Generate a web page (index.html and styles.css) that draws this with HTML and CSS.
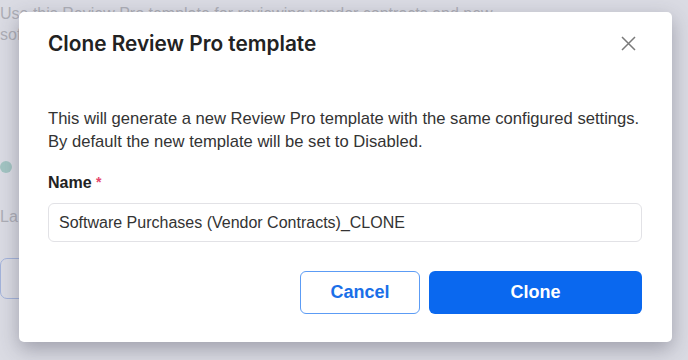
FILE: index.html
```html
<!DOCTYPE html>
<html lang="en">
<head>
    <meta charset="UTF-8">
    <meta name="viewport" content="width=device-width, initial-scale=1.0">
    <title>Clone Review Pro template</title>
    <link rel="stylesheet" href="styles.css">
</head>
<body>
    <!-- Page behind the overlay -->
    <div class="page">
        <p class="page-intro">Use this Review Pro template for reviewing vendor contracts and new<br>sof</p>
        <span class="dot"></span>
        <p class="page-label">La</p>
        <div class="page-button"></div>
    </div>

    <!-- Overlay + dialog -->
    <div class="overlay">
        <div class="modal">
            <div class="modal-header">
                <h2>Clone Review Pro template</h2>
                <button class="close" aria-label="Close">
                    <svg width="15" height="15" viewBox="0 0 15 15">
                        <path d="M1 1 L14 14 M14 1 L1 14" stroke="#7a7a7a" stroke-width="1.5" fill="none"/>
                    </svg>
                </button>
            </div>
            <p class="modal-text">This will generate a new Review Pro template with the same configured settings. By default the new template will be set to Disabled.</p>
            <label class="field-label" for="name">Name <span class="req">*</span></label>
            <input class="field-input" id="name" type="text" value="Software Purchases (Vendor Contracts)_CLONE">
            <div class="modal-actions">
                <button class="btn btn-outline">Cancel</button>
                <button class="btn btn-primary">Clone</button>
            </div>
        </div>
    </div>
</body>
</html>
```

FILE: styles.css
```css
/* General Styles */
body {
    margin: 0;
    padding: 0;
    width: 688px;
    height: 360px;
    overflow: hidden;
    position: relative;
    font-family: "Liberation Sans", Arial, sans-serif;
    background-color: #fff;
    color: #333;
}

/* Page behind the overlay */
.page {
    padding-top: 3px;
    color: #888;
}
.page-intro {
    margin: 0;
    font-size: 16px;
    line-height: 21px;
}
.dot {
    display: block;
    margin-top: 116px;
    width: 12px;
    height: 12px;
    border-radius: 50%;
    background-color: #6cc3a8;
}
.page-label {
    margin: 33px 0 0 0;
    font-size: 16px;
    line-height: 21px;
}
.page-button {
    margin-top: 31px;
    width: 120px;
    height: 41px;
    box-sizing: border-box;
    border: 1.5px solid #6f96e8;
    border-radius: 7px;
}

/* Overlay */
.overlay {
    position: absolute;
    inset: 0;
    background-color: rgba(196, 197, 210, 0.62);
    padding: 12px 0 0 19px;
}
.modal {
    width: 653px;
    height: 330px;
    box-sizing: border-box;
    background-color: #fff;
    border-radius: 5px;
    box-shadow: 0 7px 20px rgba(60, 60, 80, 0.38);
    padding: 0 30px 0 29px;
}
.modal-header {
    display: flex;
    justify-content: space-between;
    align-items: center;
    height: 62px;
}
.modal-header h2 {
    margin: 0;
    font-family: Inter, "Liberation Sans", sans-serif;
    font-size: 20.8px;
    font-weight: 600;
    color: #222;
}
.close {
    border: none;
    background: none;
    padding: 0;
    margin-right: 6px;
    width: 15px;
    height: 15px;
    display: flex;
}
.modal-text {
    margin: 33px 0 0 0;
    font-size: 16.6px;
    line-height: 23px;
    color: #333;
}
.field-label {
    display: block;
    margin-top: 21px;
    font-size: 16px;
    font-weight: 700;
    color: #222;
}
.req {
    color: #e5456b;
    font-size: 14px;
    vertical-align: top;
}
.field-input {
    display: block;
    box-sizing: border-box;
    width: 594px;
    height: 39px;
    margin-top: 11px;
    padding: 0 10px;
    border: 1px solid #e2e2e6;
    border-radius: 6px;
    font-family: "Liberation Sans", Arial, sans-serif;
    font-size: 16px;
    color: #333;
}
.modal-actions {
    display: flex;
    justify-content: flex-end;
    gap: 9px;
    margin-top: 29px;
}
.btn {
    height: 43px;
    box-sizing: border-box;
    border-radius: 6px;
    font-family: "Liberation Sans", Arial, sans-serif;
    font-size: 18px;
    font-weight: 700;
}
.btn-outline {
    width: 120px;
    background-color: #fff;
    border: 1.5px solid #5c9cf5;
    color: #1a6fe8;
}
.btn-primary {
    width: 213px;
    background-color: #0a68ef;
    border: none;
    color: #fff;
}
```
